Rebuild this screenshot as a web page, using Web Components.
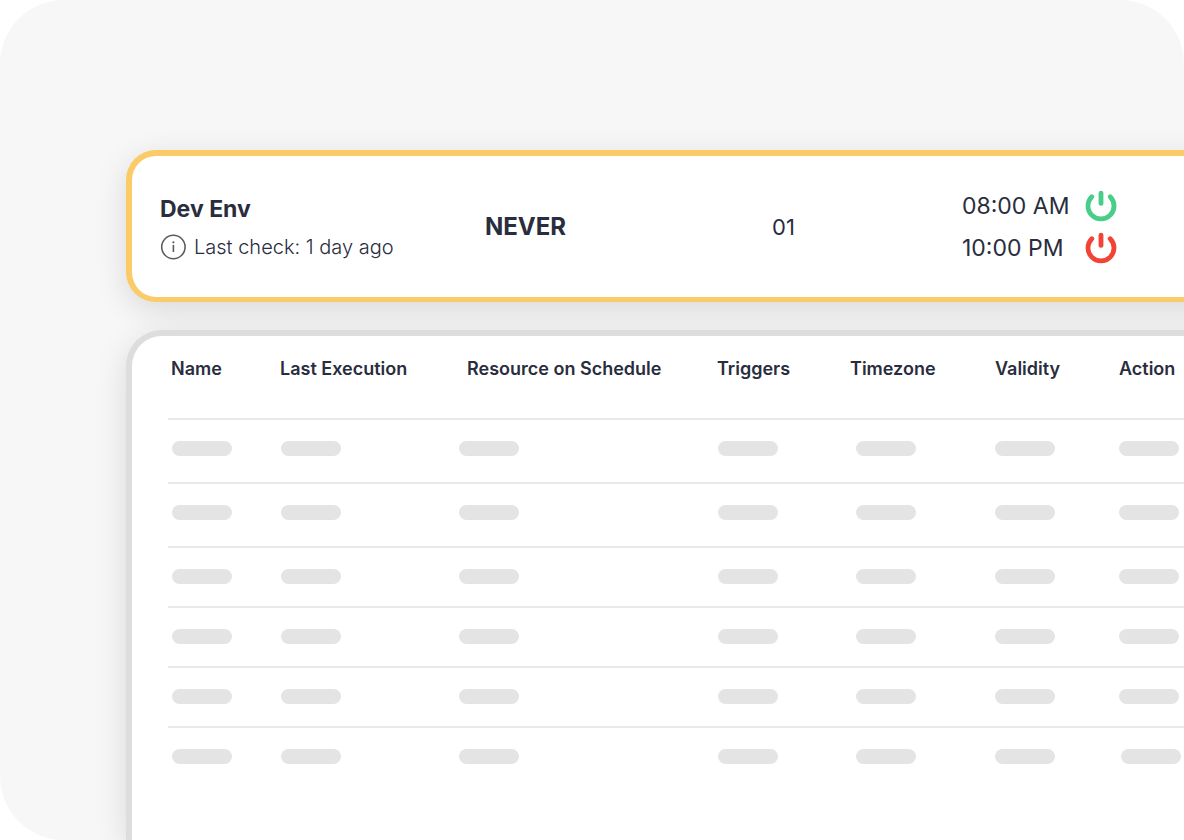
<!DOCTYPE html>
<html lang="en">
<head>
<meta charset="utf-8">
<meta name="viewport" content="width=device-width, initial-scale=1">
<title>Schedules</title>
<style>
  body { margin: 0; background: #fff; color: #2a2d3e; font-family: Inter, "Liberation Sans", sans-serif; }
</style>
</head>
<body>
<schedule-page>
  <schedule-summary>
    <env-status slot="env" name="Dev Env">Last check: 1 day ago</env-status>
    <span slot="last">NEVER</span>
    <span slot="count">01</span>
    <power-time slot="times" state="on">08:00 AM</power-time>
    <power-time slot="times" state="off">10:00 PM</power-time>
  </schedule-summary>
  <schedule-table></schedule-table>
</schedule-page>

<script>
const define = (name, html, setup) => customElements.define(name, class extends HTMLElement {
  constructor() {
    super();
    this.attachShadow({ mode: "open" }).innerHTML = html;
  }
  connectedCallback() { if (setup) setup(this, this.shadowRoot); }
});

define("schedule-page", `
  <style>
    :host { display: block; }
    main {
      box-sizing: border-box; min-height: 100vh; overflow: hidden;
      display: flex; flex-direction: column; gap: 28px;
      padding: 150px 0 0 126px; background: #f7f7f7; border-radius: 64px 64px 0 64px;
    }
    /* Both cards bleed past the right edge, so their shadows stay even there. */
    ::slotted(*) { margin-right: -40px; }
    ::slotted(schedule-table) { flex: 1; }
  </style>
  <main><slot></slot></main>`);

define("schedule-summary", `
  <style>
    :host {
      display: grid; grid-template-columns: 325fr 287fr 190fr 222fr; align-items: center;
      box-sizing: border-box; min-height: 152px; padding: 0 40px 0 28px;
      background: #fff; border: 6px solid #facb66; border-bottom-width: 5px; border-right: 0;
      border-radius: 30px 0 0 30px; box-shadow: 0 8px 32px rgba(0, 0, 0, .12);
      font-size: 24px; line-height: 32px;
    }
    .last { font-weight: 700; }
    .count { font-size: 22px; }
    .times { display: grid; gap: 10px; }
  </style>
  <div><slot name="env"></slot></div>
  <div class="last"><slot name="last"></slot></div>
  <div class="count"><slot name="count"></slot></div>
  <div class="times"><slot name="times"></slot></div>`);

define("env-status", `
  <style>
    :host { display: grid; gap: 8px; }
    h2 { margin: 0; font-size: 23px; line-height: 32px; font-weight: 700; }
    p { margin: 0; display: flex; align-items: center; gap: 8px; font-size: 20px; line-height: 28px; font-weight: 300; }
    svg { flex: none; }
  </style>
  <h2></h2>
  <p>
    <svg width="26" height="26" viewBox="0 0 26 26" fill="none" stroke="#5c5c5c" stroke-width="1.6" aria-hidden="true">
      <circle cx="13.4" cy="13" r="11.7"/>
      <path d="M13.4 11v7"/>
      <circle cx="13.4" cy="8.3" r="1.1" fill="#5c5c5c" stroke="none"/>
    </svg>
    <span><slot></slot></span>
  </p>`, (el, root) => { root.querySelector("h2").textContent = el.getAttribute("name"); });

define("power-time", `
  <style>
    :host { display: grid; grid-template-columns: 108px 32px; gap: 15px; align-items: center; font-size: 23px; line-height: 32px; color: #2a2d3e; white-space: nowrap; --power: #47cf89; }
    :host([state="off"]) { --power: #f34336; }
    svg { display: block; stroke: var(--power); }
  </style>
  <span><slot></slot></span>
  <svg width="32" height="32" viewBox="0 0 32 32" fill="none" stroke-width="4.8" stroke-linecap="round" aria-hidden="true">
    <path d="M6.8 6.7a13 13 0 1 0 18.4 0"/>
    <path d="M16 3.2v10.2"/>
  </svg>`);

define("skeleton-pill", `
  <style>
    :host { display: block; width: 60px; height: 15px; border-radius: 8px; background: #e4e4e4; }
  </style>`);

define("schedule-table", `
  <style>
    :host {
      display: block; padding: 0 40px 0 36px; background: #fff;
      border: solid #dddddd; border-width: 6px 0 0 6px;
      border-radius: 36px 0 0 0; box-shadow: 0 8px 32px rgba(0, 0, 0, .12);
    }
    table { width: 100%; min-width: 1000px; table-layout: fixed; border-collapse: separate; border-spacing: 0; }
    th, td { box-sizing: border-box; text-align: left; vertical-align: top; padding: 21px 0 0 4px; }
    th { height: 82px; font-size: 18px; line-height: 24px; font-weight: 600; white-space: nowrap; padding-left: 3px; }
    th.resource { padding-left: 12px; }
    th.timezone, th.validity, th.action { padding-left: 4px; }
    td { height: 60px; border-top: 2px solid #e9e9e9; }
    tr.tall td { height: 64px; }
    td.timezone { padding-left: 10px; }
    tr:last-child td:last-child { padding-left: 6px; }
    .name { width: 109px; } .last { width: 178px; } .triggers { width: 132px; }
    .timezone { width: 145px; } .validity { width: 124px; } .action { width: 69px; }
  </style>
  <table>
    <thead><tr>
      <th class="name">Name</th><th class="last">Last Execution</th><th class="resource">Resource on Schedule</th>
      <th class="triggers">Triggers</th><th class="timezone">Timezone</th><th class="validity">Validity</th><th class="action">Action</th>
    </tr></thead>
    <tbody></tbody>
  </table>`, (el, root) => {
    const columns = ["name", "last", "resource", "triggers", "timezone", "validity", "action"];
    const cells = columns.map(c => `<td class="${c}"><skeleton-pill></skeleton-pill></td>`).join("");
    root.querySelector("tbody").innerHTML = Array.from({ length: 6 }, (_, i) => `<tr${i < 2 ? ' class="tall"' : ""}>${cells}</tr>`).join("");
  });
</script>
</body>
</html>
